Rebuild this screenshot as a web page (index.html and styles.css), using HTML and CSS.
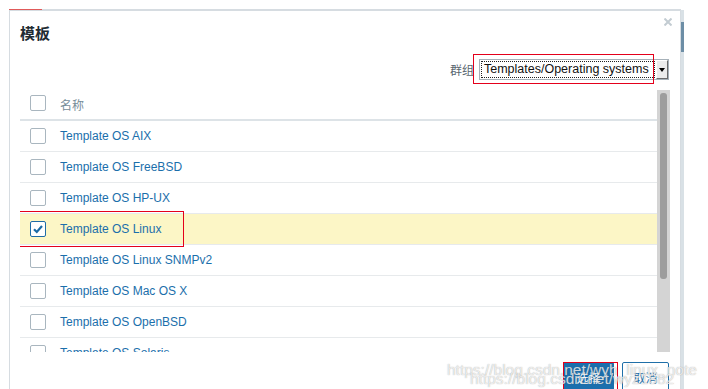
FILE: index.html
```html
<!DOCTYPE html>
<html lang="zh-CN">
<head>
    <meta charset="UTF-8">
    <meta name="viewport" content="width=device-width, initial-scale=1.0">
    <title>模板</title>
    <link rel="stylesheet" href="styles.css">
</head>
<body>
    <div class="screen">
        <div class="dialog">
            <div class="dialog-head">
                <h3 class="dialog-title">模板</h3>
                <button class="close-btn" title="关闭">
                    <svg width="8" height="8" viewBox="0 0 8 8"><path d="M0.5 0.5L7.5 7.5M7.5 0.5L0.5 7.5" stroke="#c3ccd2" stroke-width="2"/></svg>
                </button>
            </div>

            <div class="filter">
                <label class="filter-label" for="groupid">群组</label>
                <div class="select" id="groupid">
                    <span class="select-value">Templates/Operating systems</span>
                    <span class="select-arrow"><span class="arrow-tri"></span></span>
                    <span class="mark mark-select"></span>
                </div>
            </div>

            <div class="list-wrap">
                <div class="list">
                    <div class="list-head">
                        <span class="checkbox"></span>
                        <span class="col-name">名称</span>
                    </div>
                    <div class="row"><span class="checkbox"></span><a class="link">Template OS AIX</a></div>
                    <div class="row"><span class="checkbox"></span><a class="link">Template OS FreeBSD</a></div>
                    <div class="row"><span class="checkbox"></span><a class="link">Template OS HP-UX</a></div>
                    <div class="row row-selected">
                        <span class="checkbox checked">
                            <svg width="14" height="14" viewBox="0 0 14 14"><path d="M3 7.2L5.8 10L11 4" fill="none" stroke="#1b6aa5" stroke-width="2.2"/></svg>
                        </span>
                        <a class="link">Template OS Linux</a>
                        <span class="mark mark-row"></span>
                    </div>
                    <div class="row"><span class="checkbox"></span><a class="link">Template OS Linux SNMPv2</a></div>
                    <div class="row"><span class="checkbox"></span><a class="link">Template OS Mac OS X</a></div>
                    <div class="row"><span class="checkbox"></span><a class="link">Template OS OpenBSD</a></div>
                    <div class="row"><span class="checkbox"></span><a class="link">Template OS Solaris</a></div>
                    <div class="row"><span class="checkbox"></span><a class="link">Template OS Windows</a></div>
                </div>
                <div class="scrollbar"><div class="scroll-thumb"></div></div>
            </div>

            <div class="dialog-foot">
                <button class="btn btn-primary">选择<span class="mark mark-btn"></span></button>
                <button class="btn btn-alt">取消</button>
            </div>
        </div>
        <div class="page-scroll"><div class="page-thumb"></div></div>
    </div>

    <div class="watermark wm-1">https://blog.csdn.net/wyh_linux_note</div>
    <div class="watermark wm-2">https://blog.csdn.net/wyz1882</div>
</body>
</html>
```

FILE: styles.css
```css
* {
    box-sizing: border-box;
}

body {
    margin: 0;
    background-color: #fff;
    font-family: "Liberation Sans", "Noto Sans CJK SC", Arial, sans-serif;
    color: #1f2c33;
    overflow: hidden;
}

.screen {
    display: flex;
    height: 389px;
    padding: 9px 0 0 9px;
}

.dialog {
    position: relative;
    width: 672px;
    padding: 0 10px;
    background-color: #fff;
    border: 1px solid #d6dce1;
    border-top: 2px solid #d6dce1;
    border-bottom: none;
}

.dialog::before {
    content: "";
    position: absolute;
    left: -1px;
    top: -2px;
    width: 33px;
    height: 1px;
    background-color: #e05a5a;
}

.dialog-head {
    padding-top: 14px;
}

.dialog-title {
    margin: 0;
    font-size: 15px;
    line-height: 18px;
    font-weight: bold;
    color: #1f2c33;
}

.close-btn {
    position: absolute;
    top: 7px;
    right: 8px;
    width: 8px;
    height: 8px;
    padding: 0;
    border: none;
    background: none;
    display: flex;
}

.filter {
    display: flex;
    justify-content: flex-end;
    align-items: center;
    height: 21px;
    margin-top: 16px;
    padding-right: 1px;
}

.filter-label {
    margin-right: 5px;
    font-size: 12px;
    color: #59666f;
}

.select {
    position: relative;
    display: flex;
    width: 190px;
    height: 21px;
    border: 1px solid #a6b1b9;
    background-color: #fff;
}

.select-value {
    flex: 1;
    margin: 1px;
    padding-left: 3px;
    outline: 1px dotted #222;
    outline-offset: -1px;
    font-size: 12.5px;
    line-height: 17px;
    color: #111;
    white-space: nowrap;
    overflow: hidden;
}

.select-arrow {
    width: 12px;
    display: flex;
    align-items: center;
    justify-content: center;
    background-color: #ececec;
    border-left: 1px solid #fff;
    border-top: 1px solid #fff;
    border-right: 1px solid #6b6b6b;
    border-bottom: 1px solid #6b6b6b;
}

.arrow-tri {
    width: 0;
    height: 0;
    border-left: 3px solid transparent;
    border-right: 3px solid transparent;
    border-top: 4px solid #000;
}

.list-wrap {
    display: flex;
    height: 262px;
    margin-top: 10px;
    overflow: hidden;
}

.list {
    width: 637px;
    overflow: hidden;
}

.list-head {
    display: flex;
    align-items: center;
    height: 31px;
    padding: 0 0 4px 10px;
    border-bottom: 2px solid #dde3e7;
}

.col-name {
    margin-left: 14px;
    margin-top: 3px;
    font-size: 12px;
    color: #768d99;
}

.row {
    position: relative;
    display: flex;
    align-items: center;
    height: 31px;
    padding-left: 10px;
    border-bottom: 1px solid #e7eaec;
}

.row-selected {
    background-color: #fcf6c6;
}

.checkbox {
    display: flex;
    align-items: center;
    justify-content: center;
    width: 16px;
    height: 16px;
    background-color: #fff;
    border: 1px solid #a9b6bf;
    border-radius: 2px;
}

.checkbox.checked {
    border-color: #1f6ca6;
}

.link {
    margin-left: 14px;
    font-size: 12px;
    color: #1b6fab;
    cursor: pointer;
}

.scrollbar {
    width: 13px;
    height: 262px;
    padding: 3px 0 0 3px;
    background-color: #d4d4d4;
}

.scroll-thumb {
    width: 7px;
    height: 186px;
    background-color: #9d9d9d;
    border-radius: 3px;
}

.dialog-foot {
    display: flex;
    justify-content: flex-end;
    gap: 8px;
    margin-top: 10px;
    padding-right: 1px;
}

.btn {
    position: relative;
    height: 30px;
    padding: 0;
    font-family: "Liberation Sans", "Noto Sans CJK SC", Arial, sans-serif;
    font-size: 12px;
    border: 1px solid #1f6fa8;
    border-radius: 2px;
    cursor: pointer;
}

.btn-primary {
    width: 51px;
    background-color: #1b6fad;
    color: #fff;
}

.btn-alt {
    width: 47px;
    background-color: #fff;
    color: #1f6fa8;
}

.page-scroll {
    width: 3px;
    margin-top: 1px;
    background-color: #d9e1e6;
}

.page-thumb {
    height: 30px;
    margin-top: 12px;
    background-color: #6d8ea6;
}

/* red annotation frames from the screenshot */
.mark {
    position: absolute;
    border: 1px solid #e4001b;
    pointer-events: none;
}

.mark-select {
    left: -7px;
    top: -6px;
    width: 181px;
    height: 30px;
}

.mark-row {
    left: -3px;
    top: -3px;
    width: 167px;
    height: 36px;
}

.mark-btn {
    left: -1px;
    top: -1px;
    width: 55px;
    height: 32px;
}

.watermark {
    position: absolute;
    font-family: "Liberation Sans", Arial, sans-serif;
    font-size: 15.5px;
    line-height: 18px;
    white-space: nowrap;
    color: rgba(255, 255, 255, 0.75);
    text-shadow: 0 0 1px rgba(90, 90, 90, 0.55);
    pointer-events: none;
}

.wm-1 {
    left: 447px;
    top: 361px;
}

.wm-2 {
    left: 470px;
    top: 370px;
}
```
